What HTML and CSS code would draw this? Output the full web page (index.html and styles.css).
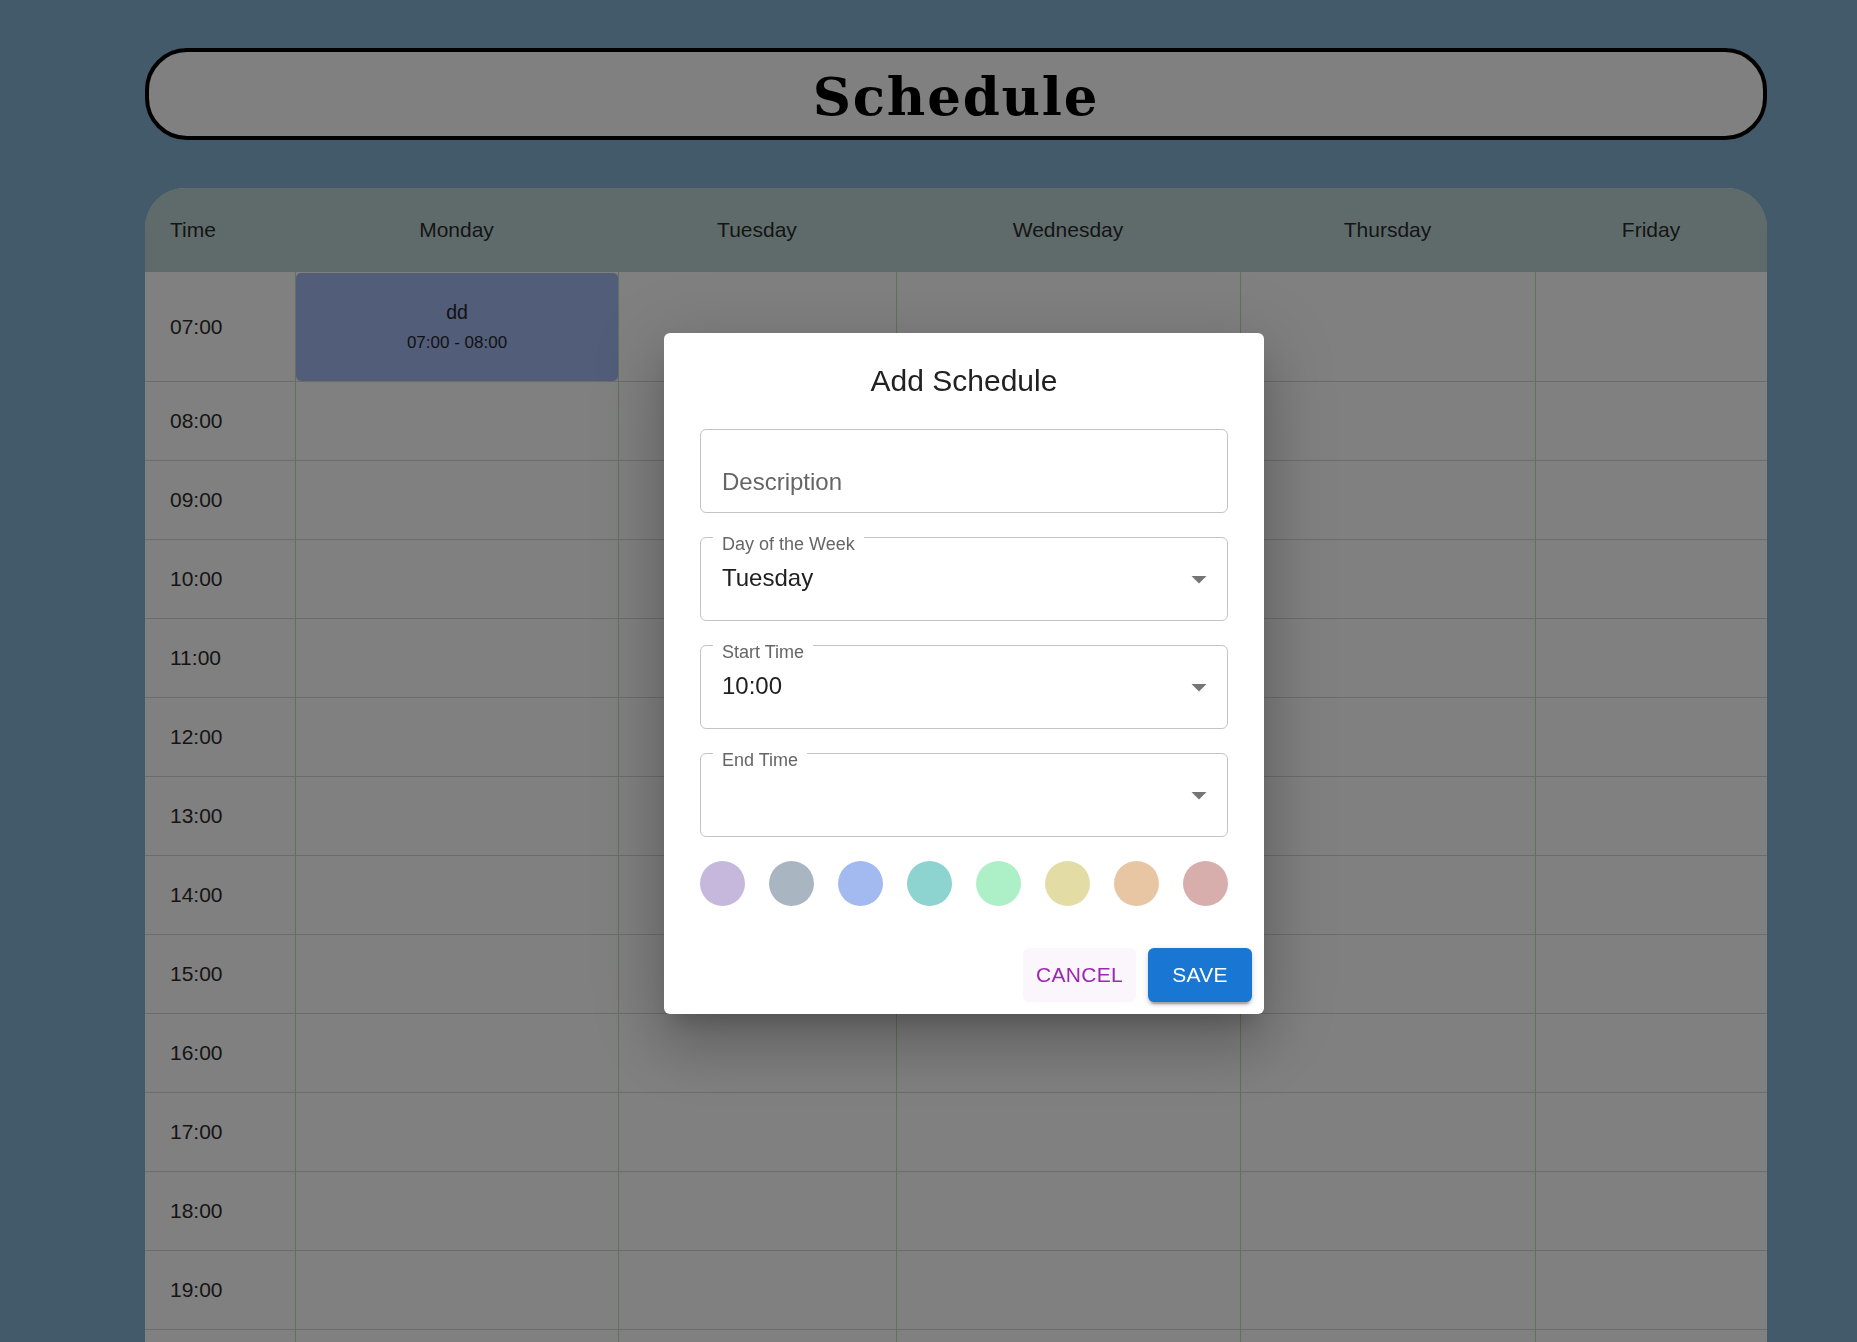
FILE: index.html
```html
<!DOCTYPE html>
<html lang="en">
<head>
<meta charset="utf-8">
<title>Schedule</title>
<link rel="stylesheet" href="styles.css">
</head>
<body>
<div class="page">
  <header class="title-bar"><h1 class="title">Schedule</h1></header>

  <div class="timetable">
    <div class="th th-time">Time</div>
    <div class="th">Monday</div>
    <div class="th">Tuesday</div>
    <div class="th">Wednesday</div>
    <div class="th">Thursday</div>
    <div class="th">Friday</div>

    <div class="td td-time first">07:00</div>
    <div class="td first"><div class="event"><span class="event-name">dd</span><span class="event-time">07:00 - 08:00</span></div></div>
    <div class="td first"></div><div class="td first"></div><div class="td first"></div><div class="td first"></div>

    <div class="td td-time">08:00</div><div class="td"></div><div class="td"></div><div class="td"></div><div class="td"></div><div class="td"></div>
    <div class="td td-time">09:00</div><div class="td"></div><div class="td"></div><div class="td"></div><div class="td"></div><div class="td"></div>
    <div class="td td-time">10:00</div><div class="td"></div><div class="td"></div><div class="td"></div><div class="td"></div><div class="td"></div>
    <div class="td td-time">11:00</div><div class="td"></div><div class="td"></div><div class="td"></div><div class="td"></div><div class="td"></div>
    <div class="td td-time">12:00</div><div class="td"></div><div class="td"></div><div class="td"></div><div class="td"></div><div class="td"></div>
    <div class="td td-time">13:00</div><div class="td"></div><div class="td"></div><div class="td"></div><div class="td"></div><div class="td"></div>
    <div class="td td-time">14:00</div><div class="td"></div><div class="td"></div><div class="td"></div><div class="td"></div><div class="td"></div>
    <div class="td td-time">15:00</div><div class="td"></div><div class="td"></div><div class="td"></div><div class="td"></div><div class="td"></div>
    <div class="td td-time">16:00</div><div class="td"></div><div class="td"></div><div class="td"></div><div class="td"></div><div class="td"></div>
    <div class="td td-time">17:00</div><div class="td"></div><div class="td"></div><div class="td"></div><div class="td"></div><div class="td"></div>
    <div class="td td-time">18:00</div><div class="td"></div><div class="td"></div><div class="td"></div><div class="td"></div><div class="td"></div>
    <div class="td td-time">19:00</div><div class="td"></div><div class="td"></div><div class="td"></div><div class="td"></div><div class="td"></div>
    <div class="td td-time"></div><div class="td"></div><div class="td"></div><div class="td"></div><div class="td"></div><div class="td"></div>
  </div>
</div>

<div class="backdrop">
  <div class="dialog" role="dialog" aria-labelledby="dlg-title">
    <h2 class="dialog-title" id="dlg-title">Add Schedule</h2>
    <div class="dialog-content">
      <div class="field field-desc"><span class="placeholder">Description</span></div>
      <div class="field">
        <span class="field-label">Day of the Week</span>
        <span class="field-value">Tuesday</span>
        <svg class="arrow" viewBox="0 0 24 24" width="36" height="36"><path d="M7 10l5 5 5-5z"/></svg>
      </div>
      <div class="field">
        <span class="field-label">Start Time</span>
        <span class="field-value">10:00</span>
        <svg class="arrow" viewBox="0 0 24 24" width="36" height="36"><path d="M7 10l5 5 5-5z"/></svg>
      </div>
      <div class="field">
        <span class="field-label">End Time</span>
        <span class="field-value"></span>
        <svg class="arrow" viewBox="0 0 24 24" width="36" height="36"><path d="M7 10l5 5 5-5z"/></svg>
      </div>
      <div class="swatches">
        <span class="swatch c1"></span>
        <span class="swatch c2"></span>
        <span class="swatch c3"></span>
        <span class="swatch c4"></span>
        <span class="swatch c5"></span>
        <span class="swatch c6"></span>
        <span class="swatch c7"></span>
        <span class="swatch c8"></span>
      </div>
    </div>
    <div class="dialog-actions">
      <button class="btn btn-cancel">Cancel</button>
      <button class="btn btn-save">Save</button>
    </div>
  </div>
</div>
</body>
</html>
```

FILE: styles.css
```css
html, body {
  margin: 0;
  padding: 0;
  overflow: hidden;
}

body {
  background: #435a6b;
  font-family: "Liberation Sans", Arial, sans-serif;
  color: #141414;
}

.page {
  padding: 48px 90px 0 145px;
}

.title-bar {
  height: 92px;
  box-sizing: border-box;
  border: 4px solid #000;
  border-radius: 42px;
  background: #808080;
  display: flex;
  align-items: center;
  justify-content: center;
}

.title {
  margin: 4px 0 0 0;
  padding-left: 0;
  font-family: "DejaVu Serif", serif;
  font-weight: bold;
  font-size: 53px;
  line-height: 1;
  color: #000;
  letter-spacing: 1.8px;
}

.timetable {
  margin-top: 48px;
  display: grid;
  grid-template-columns: 150px 323px 278px 344px 295px 232px;
  grid-template-rows: 84px 110px;
  grid-auto-rows: 79px;
  background: #808080;
  border-radius: 40px 40px 0 0;
  overflow: hidden;
}

.th {
  background: #5f6b6a;
  display: flex;
  align-items: center;
  justify-content: center;
  font-size: 21px;
  color: #141414;
}

.th-time {
  justify-content: flex-start;
  padding-left: 25px;
}

.td {
  box-sizing: border-box;
  border-bottom: 1px solid #6c6c6c;
  border-left: 1px solid #62705f;
}

.td-time {
  border-left: none;
  display: flex;
  align-items: center;
  padding-left: 25px;
  font-size: 21px;
  color: #141414;
}

.td.first {
  padding-top: 1px;
}

.event {
  height: 100%;
  box-sizing: border-box;
  background: #515d79;
  border-radius: 5px;
  display: flex;
  flex-direction: column;
  align-items: center;
  padding-top: 27px;
  color: #111;
}

.event-name {
  font-size: 19.5px;
  line-height: 24px;
}

.event-time {
  font-size: 17px;
  line-height: 22px;
  margin-top: 8px;
}

/* Dialog */
.backdrop {
  position: fixed;
  inset: 0;
}

.dialog {
  position: absolute;
  left: 664px;
  top: 333px;
  width: 600px;
  background: #fff;
  border-radius: 6px;
  font-family: "Liberation Sans", Arial, sans-serif;
  box-shadow: 0 16px 22px -10px rgba(0,0,0,0.2),
              0 36px 57px 4px rgba(0,0,0,0.14),
              0 13px 69px 12px rgba(0,0,0,0.12);
}

.dialog-title {
  margin: 0;
  padding: 24px 36px;
  font-weight: 400;
  font-size: 30px;
  line-height: 48px;
  text-align: center;
  color: #212121;
}

.dialog-content {
  padding: 0 36px 30px;
  display: flex;
  flex-direction: column;
  gap: 24px;
}

.field {
  position: relative;
  height: 84px;
  box-sizing: border-box;
  border: 1px solid #c4c4c4;
  border-radius: 6px;
  display: flex;
  align-items: center;
  padding: 0 10px 0 21px;
}

.field-desc {
  padding-top: 22px;
}

.placeholder {
  font-size: 24px;
  color: #666;
}

.field-label {
  position: absolute;
  top: -3px;
  left: 12px;
  padding: 0 9px;
  background: #fff;
  font-size: 18px;
  line-height: 18px;
  color: #666;
}

.field-value {
  flex: 1;
  font-size: 24px;
  color: #212121;
  margin-top: -2px;
}

.arrow {
  fill: #757575;
  flex: none;
}

.swatches {
  display: flex;
  justify-content: space-between;
}

.swatch {
  width: 45px;
  height: 45px;
  border-radius: 50%;
}

.c1 { background: #c6b7dc; }
.c2 { background: #a9b6c2; }
.c3 { background: #a2baf0; }
.c4 { background: #8dd3cf; }
.c5 { background: #adf0c8; }
.c6 { background: #e3dda5; }
.c7 { background: #e8c6a4; }
.c8 { background: #d7aeab; }

.dialog-actions {
  padding: 12px;
  display: flex;
  justify-content: flex-end;
  gap: 12px;
}

.btn {
  height: 54px;
  border: none;
  border-radius: 6px;
  font-family: "Liberation Sans", Arial, sans-serif;
  font-weight: 400;
  font-size: 21px;
  letter-spacing: 0.3px;
  text-transform: uppercase;
  cursor: pointer;
}

.btn-cancel {
  width: 113px;
  padding: 0;
  background: #fbf5fc;
  color: #9c27b0;
}

.btn-save {
  width: 104px;
  padding: 0;
  background: #1976d2;
  color: #fff;
  box-shadow: 0 4.5px 1.5px -3px rgba(0,0,0,0.2),
              0 3px 3px 0 rgba(0,0,0,0.14),
              0 1.5px 7.5px 0 rgba(0,0,0,0.12);
}
```
